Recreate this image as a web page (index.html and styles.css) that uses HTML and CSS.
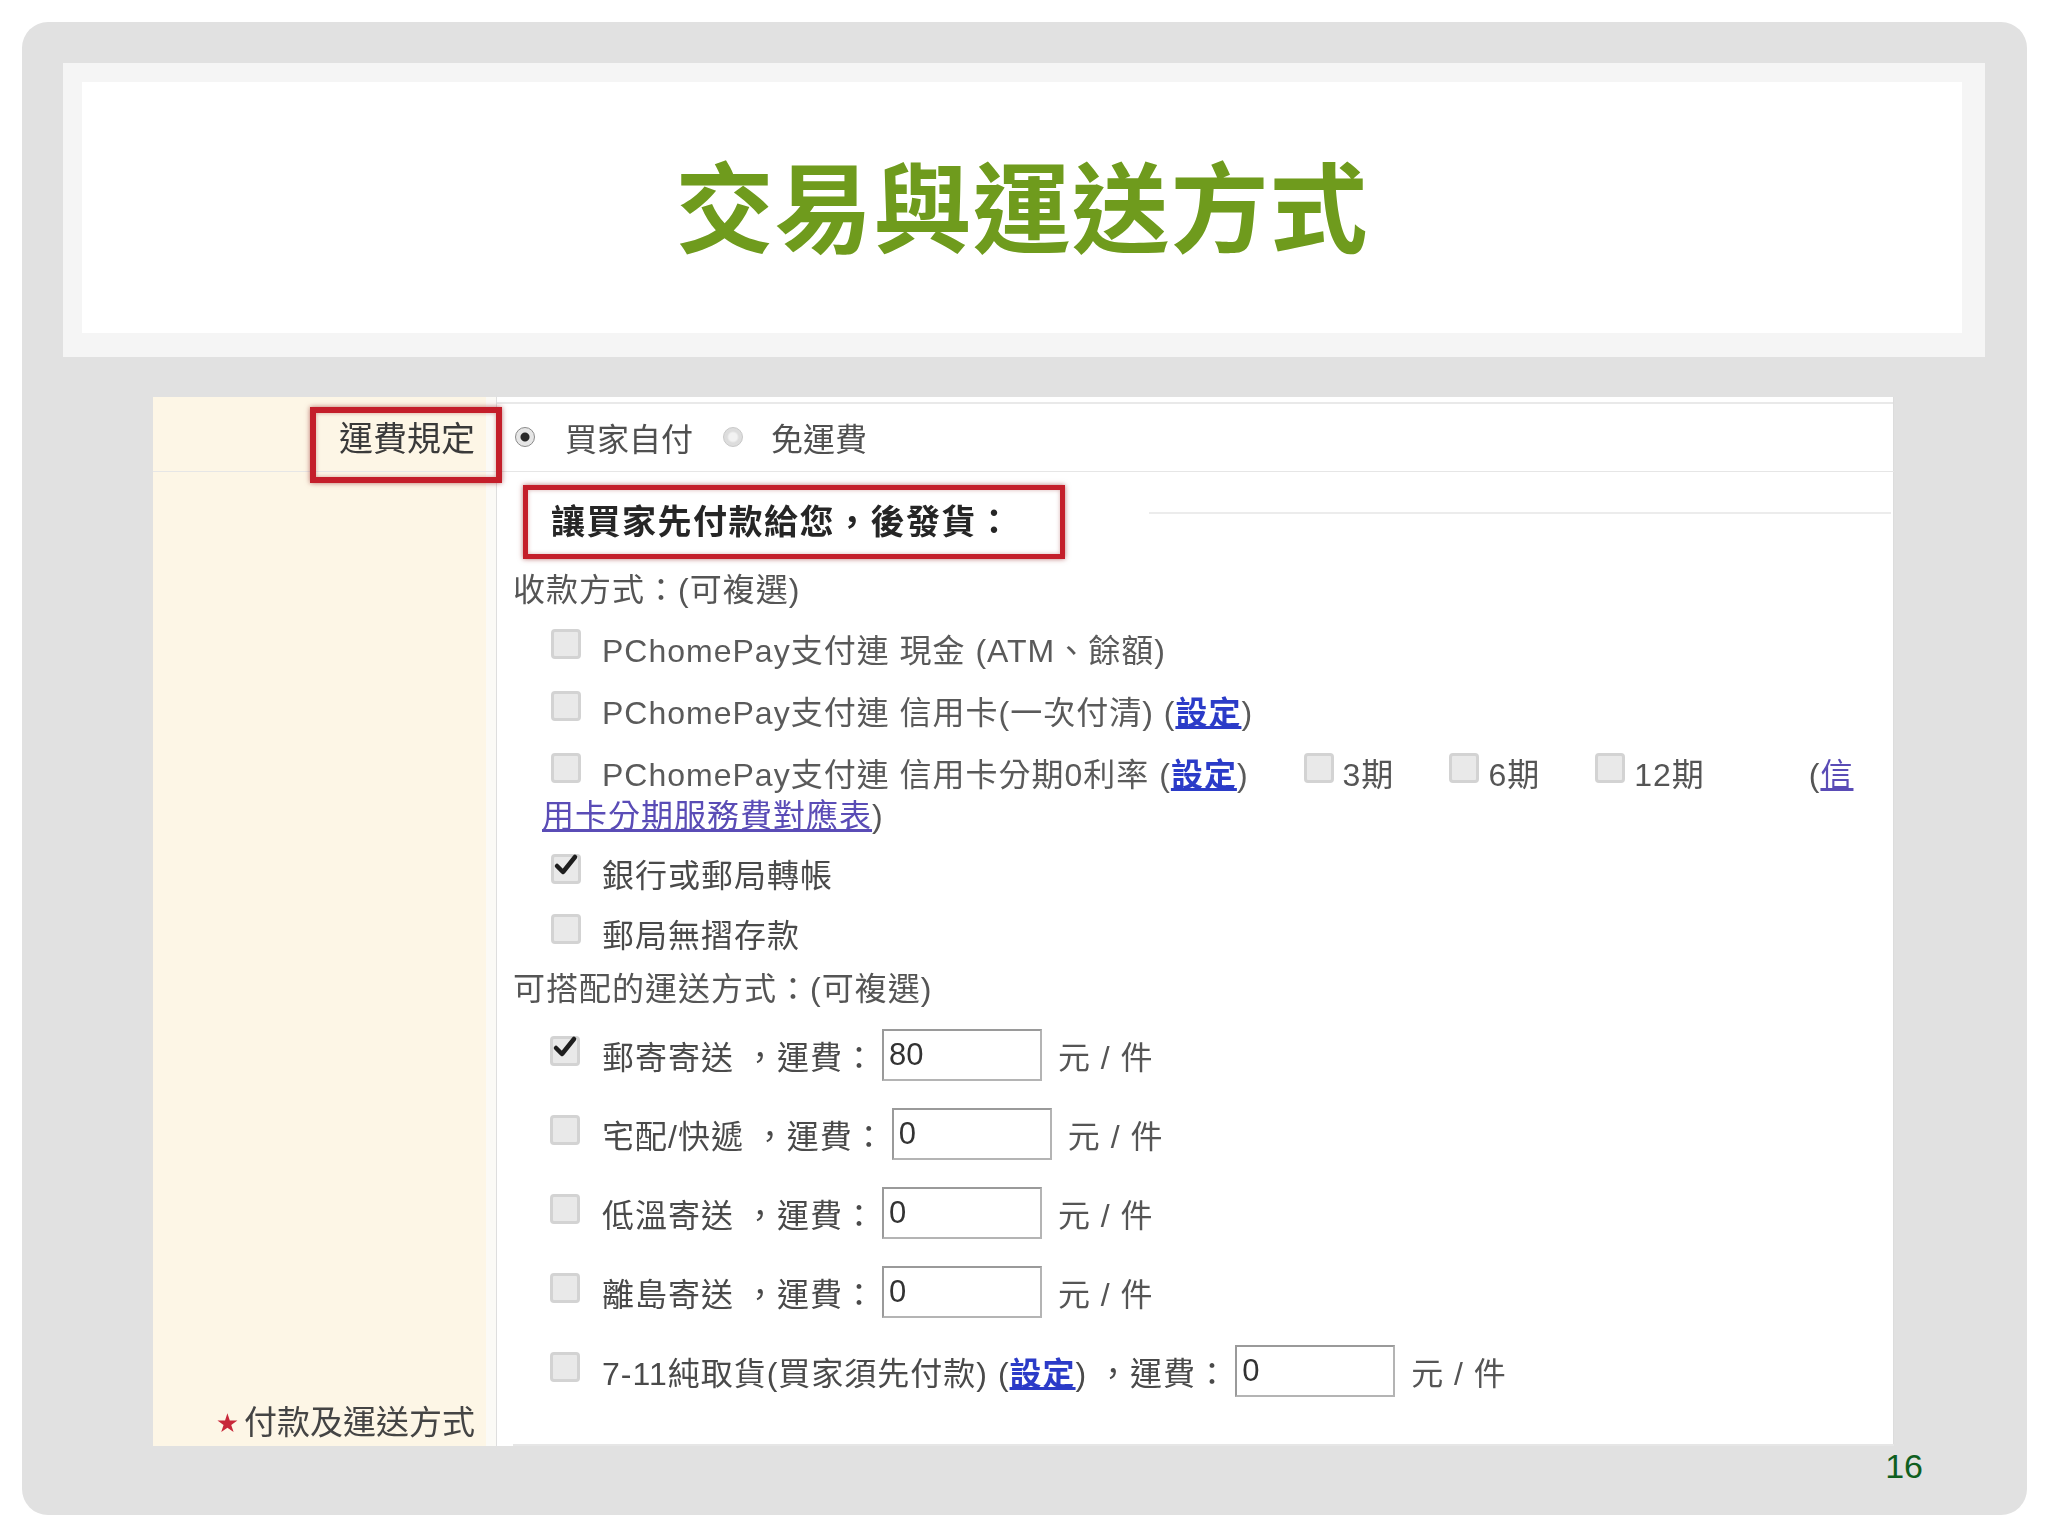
FILE: index.html
```html
<!DOCTYPE html>
<html lang="zh-Hant">
<head>
<meta charset="utf-8">
<title>交易與運送方式</title>
<link rel="stylesheet" href="styles.css">
</head>
<body>
<div class="slide">
  <div class="band">
    <div class="titlebox"><h1 class="title">交易與運送方式</h1></div>
  </div>

  <div class="shot">
    <div class="mark-rule"></div>

    <div class="row row-top">
      <div class="lcell lcell-top">運費規定</div>
      <div class="rcell rcell-top">
        <span class="radio on"></span><span class="rlabel">買家自付</span>
        <span class="radio off"></span><span class="rlabel">免運費</span>
      </div>
    </div>

    <div class="row row-main">
      <div class="lcell lcell-main"><span class="reqlabel"><span class="star">★</span>付款及運送方式</span></div>
      <div class="rcell rcell-main">
        <div class="fs">
          <div class="legend-row">
            <div class="legend">讓買家先付款給您，後發貨：</div>
            <div class="legend-line"></div>
          </div>

          <div class="heading">收款方式：(可複選)</div>

          <div class="opt"><span class="cb"></span><span class="txt">PChomePay支付連 現金 (ATM、餘額)</span></div>
          <div class="opt"><span class="cb"></span><span class="txt">PChomePay支付連 信用卡(一次付清) (<a class="lnk">設定</a>)</span></div>
          <div class="opt">
            <span class="cb"></span><span class="txt">PChomePay支付連 信用卡分期0利率 (<a class="lnk">設定</a>)</span>
            <span class="sub"><span class="cb"></span><span class="subtxt">3期</span></span>
            <span class="sub"><span class="cb"></span><span class="subtxt">6期</span></span>
            <span class="sub"><span class="cb"></span><span class="subtxt">12期</span></span>
            <span class="tail">(<a class="lnk2">信</a></span>
          </div>
          <div class="wrapline"><a class="lnk2">用卡分期服務費對應表</a>)</div>

          <div class="opt opt-s"><span class="cb checked"><svg viewBox="0 0 30 30" width="30" height="30"><path d="M6 14 L12 20 L24 5" fill="none" stroke="#1e1e1e" stroke-width="4.5" stroke-linecap="round" stroke-linejoin="round"/></svg></span><span class="txt dark">銀行或郵局轉帳</span></div>
          <div class="opt opt-s"><span class="cb"></span><span class="txt dark">郵局無摺存款</span></div>

          <div class="heading heading2">可搭配的運送方式：(可複選)</div>

          <div class="ship"><span class="cb checked"><svg viewBox="0 0 30 30" width="30" height="30"><path d="M6 14 L12 20 L24 5" fill="none" stroke="#1e1e1e" stroke-width="4.5" stroke-linecap="round" stroke-linejoin="round"/></svg></span><span class="txt dark">郵寄寄送 ，運費：</span><span class="inp">80</span><span class="unit">元 / 件</span></div>
          <div class="ship"><span class="cb"></span><span class="txt dark">宅配/快遞 ，運費：</span><span class="inp">0</span><span class="unit">元 / 件</span></div>
          <div class="ship"><span class="cb"></span><span class="txt dark">低溫寄送 ，運費：</span><span class="inp">0</span><span class="unit">元 / 件</span></div>
          <div class="ship"><span class="cb"></span><span class="txt dark">離島寄送 ，運費：</span><span class="inp">0</span><span class="unit">元 / 件</span></div>
          <div class="ship"><span class="cb"></span><span class="txt dark">7-11純取貨(買家須先付款) (<a class="lnk">設定</a>) ，運費：</span><span class="inp">0</span><span class="unit">元 / 件</span></div>
        </div>
      </div>
    </div>
  </div>

  <div class="pageno">16</div>
</div>
</body>
</html>
```

FILE: styles.css
```css
html, body {
  margin: 0;
  padding: 0;
  background: #ffffff;
}

body {
  width: 2048px;
  height: 1536px;
  overflow: hidden;
  font-family: "Liberation Sans", "Noto Sans CJK TC", sans-serif;
}

.slide {
  box-sizing: border-box;
  margin: 22px;
  width: 2005px;
  height: 1493px;
  padding: 41px 42px 0 41px;
  background: #e1e1e1;
  border-radius: 26px;
  overflow: hidden;
}

.band {
  box-sizing: border-box;
  height: 294px;
  padding: 19px 23px 24px 19px;
  background: #f5f5f5;
}

.titlebox {
  box-sizing: border-box;
  height: 100%;
  padding-bottom: 12px;
  background: #ffffff;
  display: flex;
  align-items: center;
  justify-content: center;
}

.title {
  margin: 0;
  font-family: "Noto Sans CJK TC", sans-serif;
  font-weight: 700;
  font-size: 98px;
  line-height: 1;
  color: #6f9b1d;
  letter-spacing: 1px;
}

/* ---------- screenshot ---------- */
.shot {
  position: relative;
  margin: 40px 0 0 90px;
  width: 1741px;
  height: 1049px;
  display: flex;
  flex-direction: column;
  background: #ffffff;
  color: #555555;
  font-size: 32px;
  letter-spacing: 1px;
  filter: blur(0.4px);
}

.row {
  display: grid;
  grid-template-columns: 343px 1fr;
}

.row-top {
  height: 79px;
  border-bottom: 1px solid #e6e6e6;
  box-sizing: border-box;
}

.row-main {
  flex: 1;
}

.lcell {
  box-sizing: border-box;
  background: #fdf6e6;
  border-right: 10px solid #fbfaf6;
  padding-right: 11px;
  display: flex;
  justify-content: flex-end;
  color: #3a3a3a;
  letter-spacing: 0;
}

.lcell-top {
  align-items: center;
  font-size: 34px;
  padding-top: 4px;
}

.lcell-main {
  align-items: flex-end;
  font-size: 33px;
  line-height: 34px;
  padding-bottom: 4px;
  color: #444444;
}

.reqlabel {
  white-space: nowrap;
}

.star {
  color: #c8283a;
  font-family: "DejaVu Sans", sans-serif;
  font-size: 26px;
  margin-right: 5px;
  position: relative;
  top: -2px;
}

.rcell {
  border-left: 1px solid #dedede;
  border-right: 1px solid #dcdcdc;
  box-sizing: border-box;
}

.rcell-top {
  display: flex;
  align-items: center;
  padding-left: 18px;
  padding-top: 6px;
  background: linear-gradient(#ffffff 0 5px, #e9e9e9 5px 7px, #ffffff 7px);
}

.radio {
  box-sizing: border-box;
  width: 20px;
  height: 20px;
  border-radius: 50%;
  flex: none;
}

.radio.on {
  border: 1px solid #8a8a8a;
  background: radial-gradient(circle, #2a2a2a 0 4px, #e6e6e6 5px);
  margin-right: 30px;
}

.radio.off {
  border: 1px solid #c8c8c8;
  background: radial-gradient(circle, #f2f2f2 0 4px, #dddddd 6px);
  margin-left: 30px;
  margin-right: 28px;
}

.rlabel {
  font-size: 32px;
  color: #505050;
  letter-spacing: 0;
}

/* red annotation boxes */
.mark-rule {
  position: absolute;
  left: 157px;
  top: 10px;
  width: 192px;
  height: 76px;
  box-sizing: border-box;
  border: 6px solid #c41e2a;
  box-shadow: 0 0 5px rgba(130, 0, 0, 0.55), inset 0 0 4px rgba(130, 0, 0, 0.35);
  z-index: 2;
}

.rcell-main {
  padding-left: 16px;
}

.fs {
  box-sizing: border-box;
  height: 961px;
  border-bottom: 2px solid #e6e6e6;
  margin-right: -1px;
}

.legend-row {
  display: flex;
  margin-top: 13px;
  margin-left: 10px;
}

.legend {
  box-sizing: border-box;
  width: 542px;
  height: 74px;
  border: 5px solid #c41e2a;
  box-shadow: 0 0 5px rgba(130, 0, 0, 0.55), inset 0 0 4px rgba(130, 0, 0, 0.3);
  padding-left: 23px;
  font-weight: 700;
  font-size: 34px;
  line-height: 64px;
  letter-spacing: 1.5px;
  color: #262626;
  white-space: nowrap;
  flex: none;
}

.legend-line {
  flex: 1;
  height: 2px;
  margin: 27px 3px 0 84px;
  background: #ececec;
}

.heading {
  margin-top: 5px;
  height: 53px;
  line-height: 53px;
  color: #555555;
  white-space: nowrap;
}

.heading2 {
  margin-top: 0;
  height: 52px;
  line-height: 52px;
}

.opt {
  display: flex;
  align-items: center;
  height: 62px;
  padding-left: 38px;
  white-space: nowrap;
}

.opt-s {
  height: 60px;
}

.cb {
  position: relative;
  box-sizing: border-box;
  width: 30px;
  height: 30px;
  flex: none;
  border: 3px solid #d3d3d3;
  border-radius: 4px;
  background: #e9e9e9;
  margin-right: 21px;
  margin-top: -8px;
}

.cb.checked svg {
  position: absolute;
  left: -3px;
  top: -5px;
}

.txt {
  color: #5a5a5a;
}

.txt.dark {
  color: #4a4a4a;
}

.lnk {
  color: #2b3bc8;
  text-decoration: underline;
  font-weight: 700;
}

.lnk2 {
  color: #5a4cb6;
  text-decoration: underline;
}

.sub {
  display: flex;
  align-items: center;
  margin-left: 55px;
}

.sub .cb {
  margin-right: 9px;
}

.subtxt {
  color: #555555;
}

.tail {
  margin-left: 104px;
  color: #555555;
}

.wrapline {
  padding-left: 29px;
  height: 26px;
  line-height: 26px;
  margin-bottom: 14px;
  color: #555555;
  white-space: nowrap;
}

.ship {
  display: flex;
  align-items: center;
  height: 79px;
  padding-left: 37px;
  white-space: nowrap;
}

.ship .cb {
  margin-right: 22px;
}

.inp {
  box-sizing: border-box;
  width: 160px;
  height: 52px;
  margin-left: 6px;
  padding: 0 5px;
  border: 2px solid #b4b4b4;
  border-top-color: #9a9a9a;
  border-left-color: #9a9a9a;
  background: #ffffff;
  font-size: 31px;
  line-height: 48px;
  letter-spacing: 0;
  color: #333333;
  flex: none;
}

.unit {
  margin-left: 16px;
  color: #555555;
}

.pageno {
  text-align: right;
  padding-right: 62px;
  font-family: "Liberation Sans", sans-serif;
  font-size: 34px;
  line-height: 40px;
  color: #0f5f1f;
}
```
